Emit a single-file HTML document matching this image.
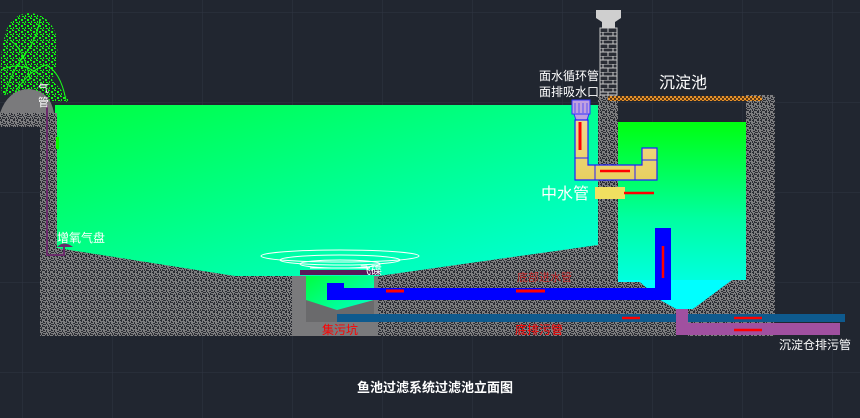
<!DOCTYPE html>
<html><head><meta charset="utf-8"><style>
html,body{margin:0;padding:0;background:#212630;}
svg{display:block}
text{font-family:"Liberation Sans","Noto Sans CJK SC",sans-serif;}
</style></head><body>
<svg width="860" height="418" viewBox="0 0 860 418" xmlns="http://www.w3.org/2000/svg">
<defs>
<pattern id="grid" width="90" height="90" patternUnits="userSpaceOnUse" x="22" y="12">
<path d="M0 0H90M0 0V90" stroke="#2f3542" stroke-width="1" fill="none"/>
</pattern>
<pattern id="conc" width="8" height="8" patternUnits="userSpaceOnUse">
<rect width="8" height="8" fill="#7e7e80"/>
<rect x="0" y="0" width="2" height="1" fill="#2a2c33"/>
<rect x="3" y="1" width="1" height="2" fill="#2a2c33"/>
<rect x="5" y="0" width="2" height="1" fill="#2a2c33"/>
<rect x="1" y="3" width="2" height="1" fill="#2a2c33"/>
<rect x="6" y="2" width="1" height="2" fill="#2a2c33"/>
<rect x="4" y="4" width="2" height="1" fill="#2a2c33"/>
<rect x="0" y="5" width="1" height="2" fill="#2a2c33"/>
<rect x="2" y="6" width="2" height="1" fill="#2a2c33"/>
<rect x="6" y="6" width="1" height="2" fill="#2a2c33"/>
<rect x="5" y="7" width="1" height="1" fill="#2a2c33"/>
<rect x="3" y="4" width="1" height="1" fill="#2a2c33"/>
<rect x="7" y="4" width="1" height="1" fill="#2a2c33"/>
<rect x="1" y="1" width="1" height="1" fill="#2a2c33"/>
<rect x="4" y="2" width="1" height="1" fill="#2a2c33"/>
<rect x="1" y="7" width="1" height="1" fill="#2a2c33"/>
<rect x="4" y="6" width="1" height="1" fill="#2a2c33"/>
<rect x="2" y="5" width="1" height="1" fill="#2a2c33"/>
</pattern>
<pattern id="leaf" width="6" height="6" patternUnits="userSpaceOnUse">
<rect x="0" y="0" width="2" height="1" fill="#10ff10"/>
<rect x="3" y="1" width="2" height="2" fill="#10ff10"/>
<rect x="1" y="3" width="1" height="2" fill="#10ff10"/>
<rect x="4" y="4" width="2" height="1" fill="#10ff10"/>
<rect x="0" y="5" width="1" height="1" fill="#10ff10"/>
</pattern>
<pattern id="chk" width="4" height="4" patternUnits="userSpaceOnUse">
<rect width="4" height="4" fill="#e8932a"/><rect width="2" height="2" fill="#5a3a1a"/><rect x="2" y="2" width="2" height="2" fill="#5a3a1a"/>
</pattern>
<pattern id="brick" width="10" height="8" patternUnits="userSpaceOnUse">
<rect width="10" height="8" fill="#2a2d35"/>
<path d="M0 0H10M0 4H10M3 0V4M8 4V8" stroke="#c8c8c8" stroke-width="1" fill="none"/>
</pattern>
<linearGradient id="w1" x1="0" y1="0" x2="1" y2="1">
<stop offset="0" stop-color="#00ff40"/><stop offset="1" stop-color="#00ffe0"/>
</linearGradient>
<linearGradient id="w2" x1="0" y1="0" x2="0" y2="1">
<stop offset="0" stop-color="#00ff10"/><stop offset="0.6" stop-color="#00ffa0"/><stop offset="1" stop-color="#00ffe0"/>
</linearGradient>
<linearGradient id="yel" x1="0" y1="0" x2="0" y2="1">
<stop offset="0" stop-color="#f0d890"/><stop offset="1" stop-color="#e8d060"/>
</linearGradient>
</defs>
<rect width="860" height="418" fill="#212630"/>
<rect width="860" height="418" fill="url(#grid)"/>

<!-- main water -->
<rect x="55" y="105" width="545" height="175" fill="url(#w1)"/>
<!-- settling water -->
<rect x="618" y="122" width="128" height="160" fill="url(#w2)"/>
<polygon points="618,280 746,280 746,282 732,282 693,309 676,309 660,300 618,300" fill="#00ffff"/>

<!-- concrete: left ledge + wall + floor -->
<path d="M0 113 H57 V248 L235 276 H292 V336 H40 V127 H0 Z" fill="url(#conc)"/>
<path d="M378 276 L598 245 V95 H618 V282 H640 L660 300 L676 309 V336 H378 Z" fill="url(#conc)"/>
<!-- right tank walls -->
<path d="M746 95 H775 V336 H688 V309 H693 L732 280 H746 Z" fill="url(#conc)"/>
<!-- sump -->
<rect x="292" y="276" width="86" height="60" fill="#7a7a7c"/>
<rect x="306" y="276" width="68" height="46" fill="url(#w1)"/>
<polygon points="306,300 337,310 374,300 374,322 306,322" fill="#6a6a6c"/>
<rect x="300" y="270" width="80" height="5" fill="#5a1a5a"/>

<!-- plant -->
<path d="M2 95 Q-2 60 5 35 Q10 14 30 13 Q50 15 56 35 Q60 60 52 80 Q62 90 70 102 L40 100 Q20 92 2 95 Z" fill="url(#leaf)"/>
<g stroke="#18ff18" stroke-width="1" fill="none">
<path d="M5 95 Q12 70 25 55 M15 92 Q30 70 45 65 Q60 70 66 100 M2 70 Q20 60 40 75 M10 40 Q25 50 30 80 M40 20 Q35 45 20 60"/>
</g>
<!-- earth mound -->
<path d="M0 113 Q8 90 28 89 Q50 90 54 113 Z" fill="#7a7a7c"/>
<rect x="56" y="137" width="3" height="12" fill="#00ff00"/>
<!-- air pipe -->
<path d="M47 105 V255 H64 V247" stroke="#6a2a6a" stroke-width="2" fill="none"/>
<path d="M57 247 Q64 240 73 247 Z" fill="#6a2a6a"/>

<!-- chimney -->
<rect x="600" y="28" width="17" height="67" fill="url(#brick)" stroke="#c8c8c8" stroke-width="1"/>
<polygon points="596,10 621,10 621,18 615,22 615,28 602,28 602,22 596,18" fill="#cfcfcf"/>
<!-- cover -->
<rect x="608" y="96" width="154" height="5" fill="url(#chk)"/>

<!-- yellow pipes -->
<rect x="572" y="100" width="18" height="14" fill="#c0a0e0" stroke="#3030ff" stroke-width="1"/>
<path d="M575 103 V113 M579 103 V113 M583 103 V113 M587 103 V113" stroke="#3030ff" stroke-width=".7"/>
<polygon points="574,114 589,114 587,120 576,120" fill="#c0a0e0" stroke="#3030ff" stroke-width="1"/>
<path d="M575 120 H588 V165 H642 V148 H657 V180 H575 Z" fill="url(#yel)" stroke="#2020ff" stroke-width="1.2"/>
<path d="M575 158 H588 M595 165 V180 M635 165 V180 M642 160 H657" stroke="#2020ff" stroke-width="1"/>
<path d="M580 122 V150" stroke="#ff0000" stroke-width="3"/>
<path d="M600 171 H630" stroke="#ff0000" stroke-width="2.5"/>
<rect x="595" y="187" width="30" height="12" fill="#f0e060"/>
<path d="M624 193 H654" stroke="#ff0000" stroke-width="2.5"/>

<!-- blue pipe -->
<path d="M327 283 H344 V288 H655 V228 H671 V300 H327 Z" fill="#0000ff"/>
<path d="M663 246 V278" stroke="#ff0000" stroke-width="2.5"/>
<path d="M386 291 H404 M516 291 H545" stroke="#ff0000" stroke-width="3"/>
<!-- dark blue pipe -->
<rect x="337" y="314" width="508" height="8" fill="#0e5a8e"/>
<rect x="676" y="309" width="12" height="14" fill="#a050a0"/>
<rect x="676" y="323" width="164" height="12" fill="#a050a0"/>
<path d="M622 318 H640 M734 318 H762 M734 330 H762" stroke="#ff0000" stroke-width="2.5"/>

<!-- flying saucer -->
<g stroke="#ffffff" stroke-width="1" fill="none">
<ellipse cx="340" cy="256" rx="79" ry="6"/>
<ellipse cx="340" cy="260" rx="60" ry="5"/>
<ellipse cx="340" cy="264" rx="40" ry="4"/>
<path d="M310 268 H370"/>
</g>

<!-- texts -->
<g fill="#ffffff" font-size="12">
<text x="539" y="80">面水循环管</text>
<text x="539" y="96">面排吸水口</text>
<text x="57" y="242">增氧气盘</text>
<text x="38" y="92" font-size="11">气</text>
<text x="38" y="106" font-size="11">管</text>
<text x="360" y="274" font-size="11">飞碟</text>
<text x="779" y="349">沉淀仓排污管</text>
</g>
<text x="659" y="88" fill="#fff" font-size="16">沉淀池</text>
<text x="541" y="199" fill="#fff" font-size="16">中水管</text>
<text x="322" y="334" fill="#ff0000" font-size="12">集污坑</text>
<text x="515" y="334" fill="#ff0000" font-size="12">底排污管</text>
<text x="517" y="281" fill="#ff0000" font-size="11" opacity=".6">底部进水管</text>
<text x="357" y="392" fill="#fff" font-size="13" font-weight="bold">鱼池过滤系统过滤池立面图</text>
</svg>
</body></html>
